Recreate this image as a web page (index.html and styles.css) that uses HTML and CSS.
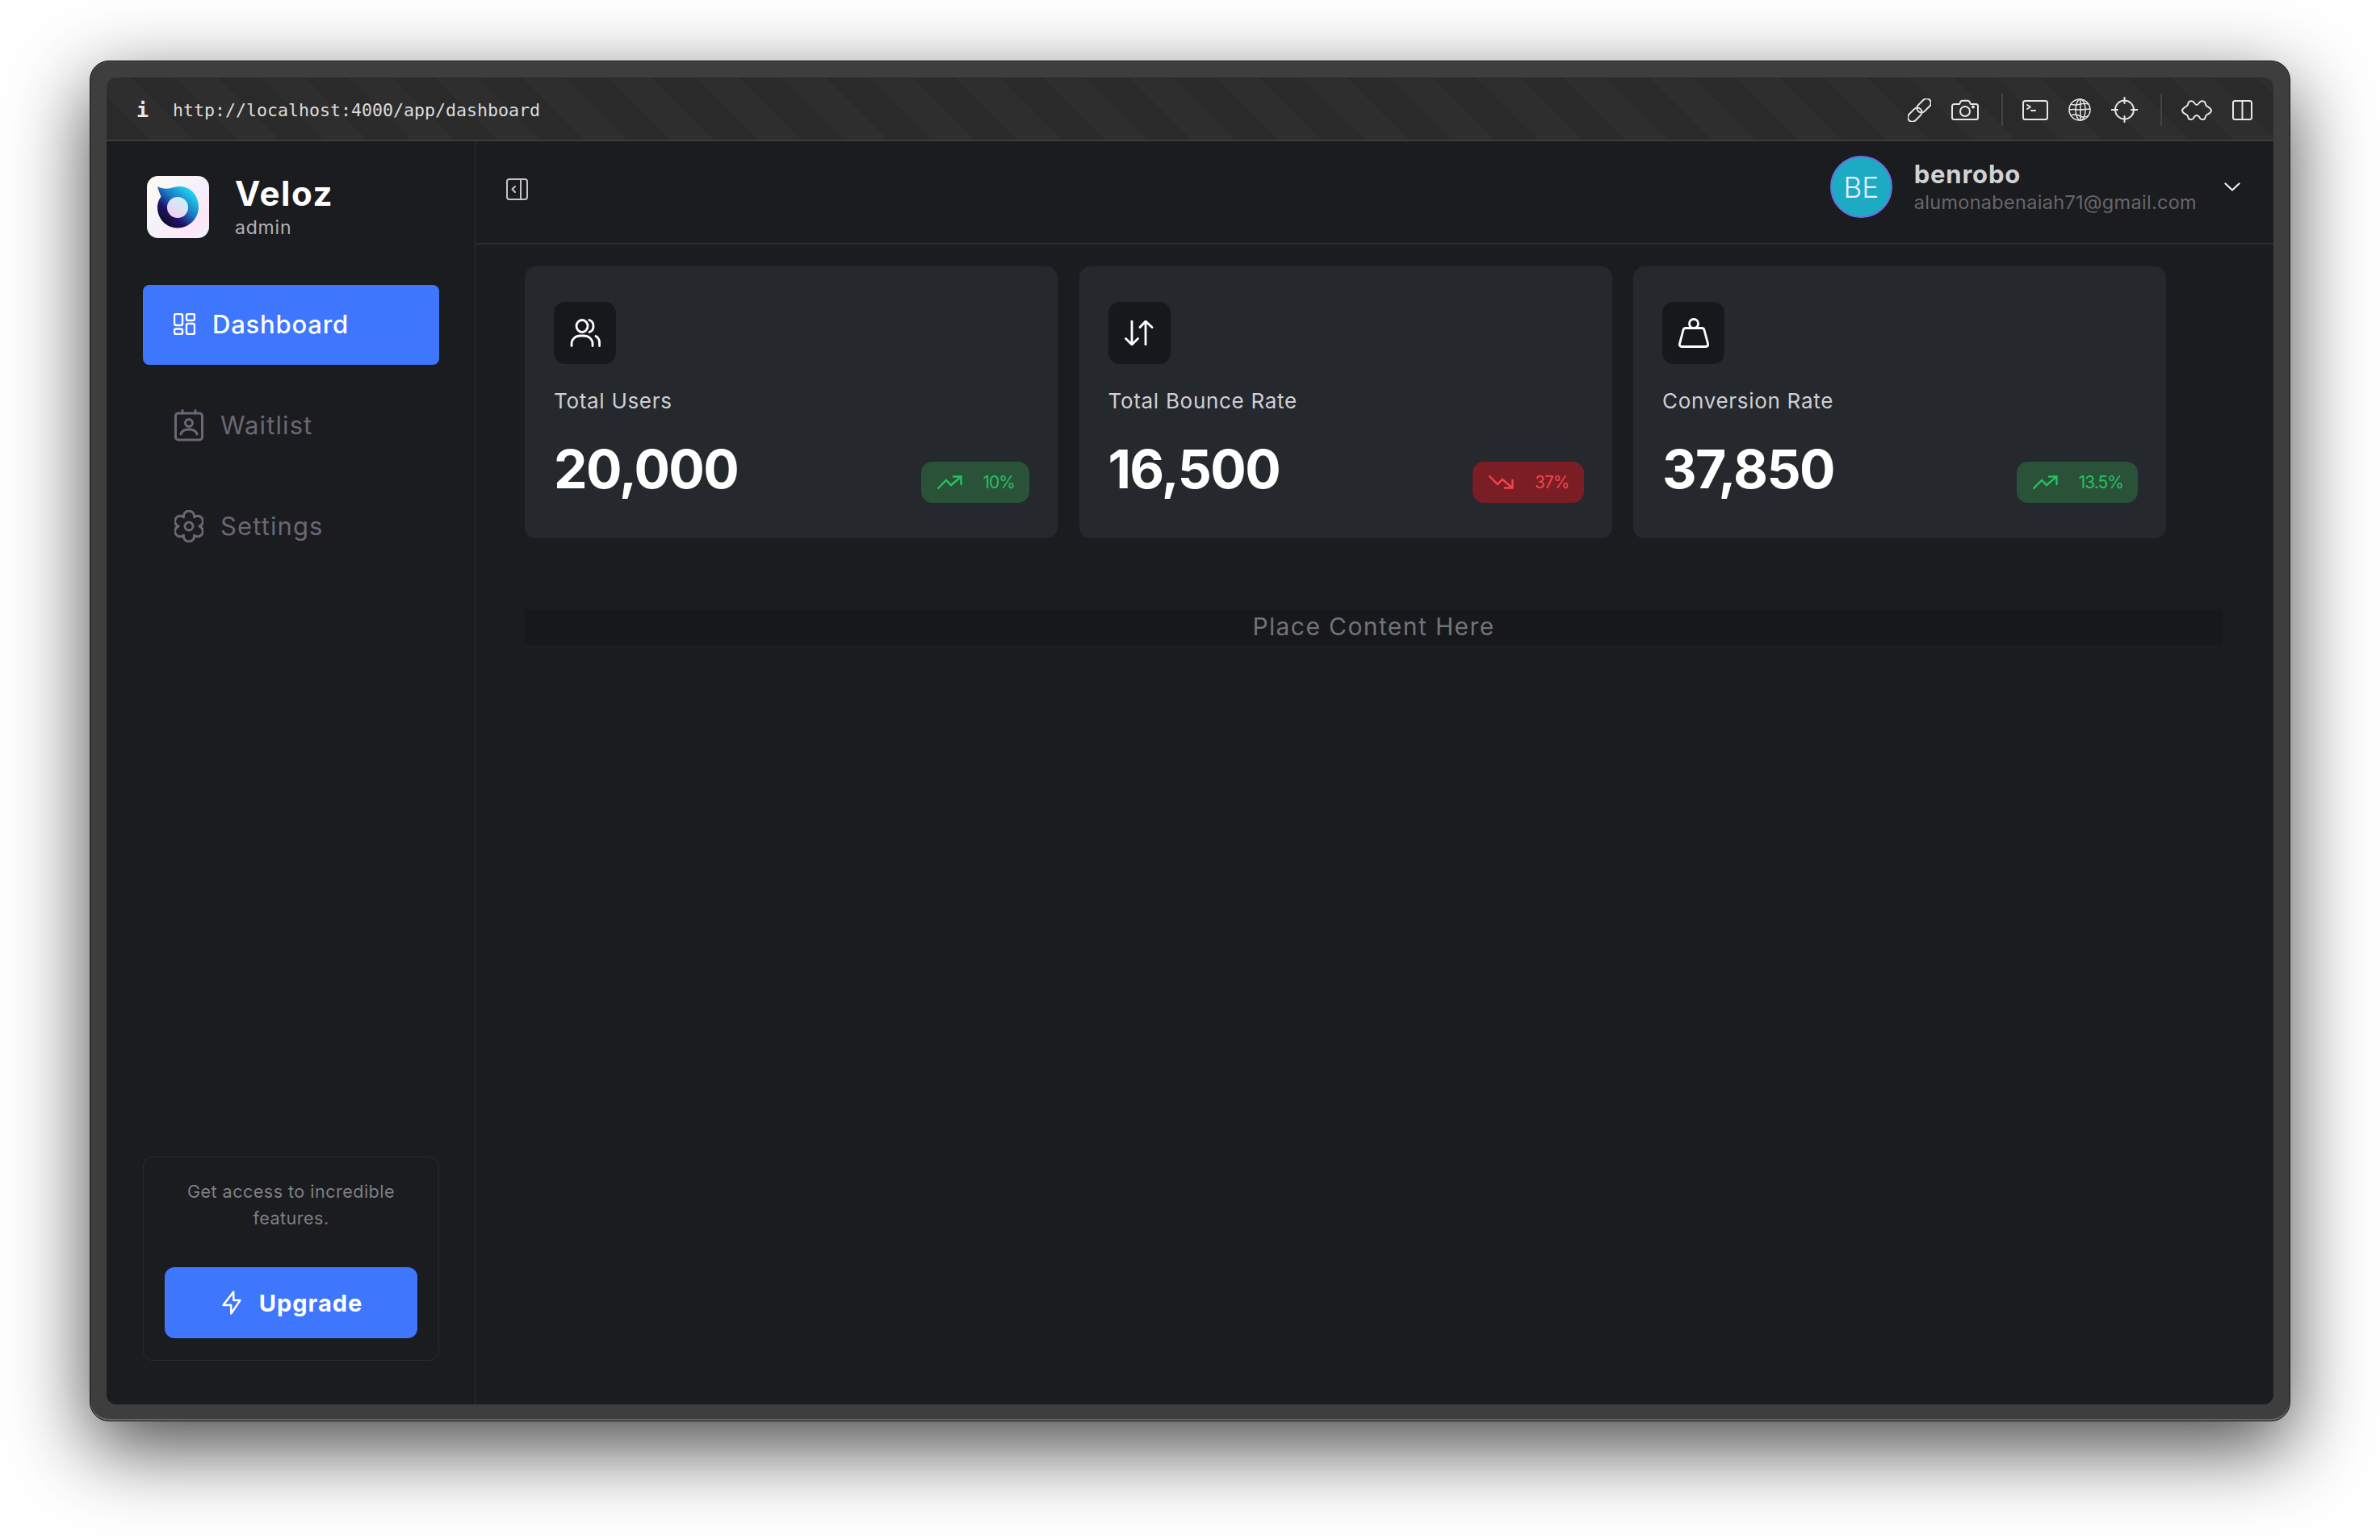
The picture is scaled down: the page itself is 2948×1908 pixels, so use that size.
FILE: index.html
```html
<!DOCTYPE html>
<html lang="en">
<head>
  <meta charset="UTF-8">
  <title>Veloz Dashboard</title>
  <link rel="stylesheet" href="styles.css">
</head>
<body>
  <div class="window">
    <div class="titlebar">
      <span class="info">i</span>
      <span class="url">http://localhost:4000/app/dashboard</span>
      <div class="tools">
        <svg class="line-icon" width="29" height="29" viewBox="0 0 29 29"><g transform="rotate(-45 14.5 14.5)"><rect x="-3.5" y="9" width="20" height="11" rx="5.5"/><rect x="12.5" y="9" width="20" height="11" rx="5.5"/></g></svg>
        <svg class="line-icon" width="34" height="26" viewBox="0 0 34 26"><path d="M3.5 6H10l1.500-3c.4-.8 1-1.200 2-1.200h7c1 0 1.600.4 2 1.200L24 6h6.500A2.500 2.500 0 0 1 33 8.500v14a2.500 2.500 0 0 1-2.500 2.500h-27A2.500 2.500 0 0 1 1 22.500v-14A2.500 2.500 0 0 1 3.500 6z"/><circle cx="17" cy="15" r="6"/><circle class="dot" cx="27" cy="9.500" r="1"/></svg>
        <span class="tool-sep"></span>
        <svg class="line-icon" width="32" height="25" viewBox="0 0 32 25"><rect x="1" y="1" width="30" height="23" rx="2.500"/><path d="M6 6l4 2.500L6 11M11 13h5"/></svg>
        <svg class="line-icon thin" width="28" height="28" viewBox="0 0 28 28"><circle cx="14" cy="14" r="13"/><ellipse cx="15" cy="14" rx="6" ry="13"/><path d="M15 1v26M3 7c4 2 8 1 12 0s7-1 10 0M1.500 14c4-1 9 0 13 0s8-1 12-1M3 21c4-2 8-1 12 1s7 1 10-1"/></svg>
        <svg class="line-icon" width="33" height="32" viewBox="0 0 33 32"><circle cx="16.500" cy="16" r="11.500"/><path d="M16.500 0v8M16.500 24v8M0 16h8M25 16h8"/></svg>
        <span class="tool-sep"></span>
        <svg class="line-icon" width="38" height="25" viewBox="0 0 38 25"><path d="M19 6C17.500 6 16.500 4 15.500 2.800 14 1 10.500.8 9 2.500 8 3.500 8.500 6 7 7 5 8.500 1 10 1 13c0 3 4 4 6 5.500 1.500 1 1 3.500 2 4.500 1.500 1.600 5 1.200 6-.5.800-1.500 1.500-3.500 4-3.500s3.200 2 4 3.500c1 1.700 4.500 2.100 6 .5 1-1 .5-3.500 2-4.500 2-1.500 6-2.500 6-5.500s-4-4.500-6-6c-1.500-1-1-3.500-2-4.500C27.500.8 24 1 22.500 2.800 21.500 4 20.500 6 19 6z"/></svg>
        <svg class="line-icon" width="25" height="25" viewBox="0 0 25 25"><rect x="1" y="1" width="23" height="23" rx="2.500"/><path d="M12.500 1v23"/></svg>
      </div>
    </div>

    <div class="layout">
      <aside class="sidebar">
        <div class="brand">
          <svg class="brand-logo" width="77" height="77" viewBox="0 0 77 77">
            <defs>
              <linearGradient id="logo-bg" x1="0" y1="0" x2="1" y2="1">
                <stop offset="0" stop-color="#fffdf2"/>
                <stop offset="0.5" stop-color="#f4f0fb"/>
                <stop offset="0.8" stop-color="#ffe6f6"/>
                <stop offset="1" stop-color="#e4f6ff"/>
              </linearGradient>
              <linearGradient id="logo-ring" x1="0.9" y1="0.1" x2="0.2" y2="0.9">
                <stop offset="0" stop-color="#25e0f7"/>
                <stop offset="0.45" stop-color="#1a78c4"/>
                <stop offset="0.75" stop-color="#20106a"/>
                <stop offset="1" stop-color="#111026"/>
              </linearGradient>
              <linearGradient id="logo-hole" x1="0.8" y1="0" x2="0.2" y2="1">
                <stop offset="0" stop-color="#c8f2fb"/>
                <stop offset="1" stop-color="#f8cdee"/>
              </linearGradient>
            </defs>
            <rect width="77" height="77" rx="14" fill="url(#logo-bg)"/>
            <path fill="url(#logo-ring)" d="M13 13c6 3 12 3.500 18 1.500 3-1 6-1.500 9-1.500 15 0 24 12 24 25.500C64 53 52 64.500 38 64.500S13 53 13 39c0-5 1.500-9.500 4.500-13.500C15.500 21 14 17 13 13z"/>
            <circle cx="38" cy="39" r="13" fill="url(#logo-hole)"/>
          </svg>
          <div class="brand-text">
            <div class="brand-name">Veloz</div>
            <div class="brand-role">admin</div>
          </div>
        </div>

        <nav class="nav">
          <a href="#dashboard" class="nav-item selected">
            <svg class="nav-icon" width="27" height="27" viewBox="0 0 27 27"><rect x="1" y="1" width="10" height="14" rx="2"/><rect x="16" y="1" width="10" height="8" rx="2"/><rect x="1" y="19.500" width="10" height="6.500" rx="2"/><rect x="16" y="13" width="10" height="13" rx="2"/></svg>
            Dashboard
          </a>
          <a href="#waitlist" class="nav-item">
            <svg class="nav-icon" width="36" height="40" viewBox="0 0 36 40"><rect x="1.500" y="5" width="33" height="33" rx="3.500"/><path d="M10 5V1.500M26 5V1.500M8 31c1-4 5-6 10-6s9 2 10 6"/><circle cx="18" cy="17" r="4.500"/></svg>
            Waitlist
          </a>
          <a href="#settings" class="nav-item">
            <svg class="nav-icon" width="36" height="40" viewBox="0 0 36 40"><path d="M11.500 8.740A6.600 6.600 0 1 1 24.500 8.740 6.600 6.600 0 1 1 31 20 6.600 6.600 0 1 1 24.500 31.260 6.600 6.600 0 1 1 11.500 31.260 6.600 6.600 0 1 1 5 20 6.600 6.600 0 1 1 11.500 8.740z"/><circle cx="18" cy="20" r="5"/></svg>
            Settings
          </a>
        </nav>

        <div class="promo">
          <p class="promo-text">Get access to incredible features.</p>
          <button class="upgrade-btn">
            <svg class="bolt" width="30" height="30" viewBox="4 2 16 20"><path d="M13.500 3v7h5.500l-7.500 11v-7H5l8.500-11z"/></svg>
            Upgrade
          </button>
        </div>
      </aside>

      <main class="main">
        <header class="header">
          <svg class="header-toggle" width="27" height="27" viewBox="0 0 27 27"><rect x="1" y="1" width="25" height="25" rx="3"/><path d="M18 1v25M11 10l-3.500 3.500L11 17"/></svg>
          <div class="profile">
            <div class="avatar">BE</div>
            <div class="profile-text">
              <div class="profile-name">benrobo</div>
              <div class="profile-mail">alumonabenaiah71@gmail.com</div>
            </div>
            <svg class="chevron" width="20" height="11" viewBox="0 0 20 11"><path d="M1.500 1.500L10 9.500l8.500-8"/></svg>
          </div>
        </header>

        <section class="content">
          <div class="cards">
            <div class="card">
              <div class="card-icon">
                <svg width="38" height="35" viewBox="0 0 38 35"><ellipse cx="15" cy="9" rx="7" ry="7.500"/><path d="M24 1.500c3 1 5 4 5 7.500s-2 6.500-5 7.500M2 33.500V31c0-6 5-10 11-10h4c6 0 11 4 11 10v2.500M32 21.500c2.500 1.500 4.500 4.500 4.500 8v4"/></svg>
              </div>
              <div class="card-label">Total Users</div>
              <div class="card-stat">
                <div class="card-value">20,000</div>
                <div class="badge badge-up">
                  <svg width="31" height="17" viewBox="0 0 31 17"><path d="M1 16l10-10 6 6L29.500 1.500M20 1.500h9.500V11"/></svg>
                  <span>10%</span>
                </div>
              </div>
            </div>

            <div class="card">
              <div class="card-icon">
                <svg width="36" height="31" viewBox="0 0 36 31"><path d="M9 1v29M1.500 22.500L9 30l7.500-7.500M26 30V1M19 8.500L26 1l8 7.500"/></svg>
              </div>
              <div class="card-label">Total Bounce Rate</div>
              <div class="card-stat">
                <div class="card-value">16,500</div>
                <div class="badge badge-down">
                  <svg width="31" height="17" viewBox="0 0 31 17"><path d="M1 1l10 10 6-6 12.500 10.500M20 15.500h9.500V6"/></svg>
                  <span>37%</span>
                </div>
              </div>
            </div>

            <div class="card">
              <div class="card-icon">
                <svg width="38" height="37" viewBox="0 0 38 37"><circle cx="19" cy="7" r="5.500"/><path d="M9 12.500h20c1.500 0 2.500.8 3 2.300l4.500 17c.5 2-.5 3.700-2.700 3.700H4.200c-2.200 0-3.200-1.700-2.700-3.700l4.500-17c.5-1.500 1.500-2.300 3-2.300z"/></svg>
              </div>
              <div class="card-label">Conversion Rate</div>
              <div class="card-stat">
                <div class="card-value">37,850</div>
                <div class="badge badge-up">
                  <svg width="31" height="17" viewBox="0 0 31 17"><path d="M1 16l10-10 6 6L29.500 1.500M20 1.500h9.500V11"/></svg>
                  <span>13.5%</span>
                </div>
              </div>
            </div>
          </div>

          <div class="placeholder">Place Content Here</div>
        </section>
      </main>
    </div>
  </div>
</body>
</html>
```

FILE: styles.css
```css
* {
  box-sizing: border-box;
}

body {
  margin: 0;
  height: 1908px;
  padding: 75px 111px 0;
  background: #fff;
  font-family: "Inter", "Liberation Sans", sans-serif;
  overflow: hidden;
}

/* outer frame */
.window {
  width: 2726px;
  height: 1686px;
  padding: 20px;
  display: flex;
  flex-direction: column;
  background: #3e3e3e;
  border: 1px solid #161616;
  border-radius: 24px;
  box-shadow: inset 0 2px 0 #444, inset 0 -2px 0 #686868, 0 32px 98px rgba(0, 0, 0, 0.72);
}

.titlebar {
  height: 79px;
  flex-shrink: 0;
  display: flex;
  align-items: center;
  padding: 3px 26px 0 37px;
  border-radius: 12px 12px 0 0;
  border-bottom: 2px solid #3b3c3e;
  background: repeating-linear-gradient(45deg, #2a2a2a 0, #2a2a2a 38px, #2e2e2e 38px, #2e2e2e 76px);
}

.info {
  width: 45px;
  font-family: "DejaVu Sans Mono", monospace;
  font-size: 25px;
  font-weight: 700;
  color: #e8e8e8;
}

.url {
  font-family: "DejaVu Sans Mono", monospace;
  font-size: 21.6px;
  color: #dcdcdc;
}

.tools {
  margin-left: auto;
  display: flex;
  align-items: center;
  gap: 25px;
}

.tool-sep {
  width: 2px;
  height: 40px;
  background: #434343;
  margin: 0 -1px 0 3px;
}

.line-icon {
  fill: none;
  stroke: #e6e6e6;
  stroke-width: 2;
  stroke-linecap: round;
  stroke-linejoin: round;
}

.line-icon.thin {
  stroke-width: 1.5;
}

.line-icon .dot {
  fill: #e6e6e6;
}

.layout {
  flex: 1;
  display: flex;
  min-height: 0;
  background: #1b1c20;
  border-radius: 0 0 12px 12px;
}

/* sidebar */
.sidebar {
  width: 457px;
  flex-shrink: 0;
  display: flex;
  flex-direction: column;
  padding: 43px 44px 54px 45px;
  border-right: 1px solid #2a2c30;
}

.brand {
  height: 77px;
  display: flex;
  align-items: center;
  gap: 32px;
  padding-left: 5px;
}

.brand-logo {
  flex-shrink: 0;
}

.brand-text {
  margin-bottom: 3px;
}

.brand-name {
  font-size: 42px;
  font-weight: 700;
  line-height: 50px;
  letter-spacing: 1.6px;
  color: #fff;
  margin-bottom: 3px;
}

.brand-role {
  font-size: 23px;
  line-height: 28px;
  letter-spacing: 0.8px;
  color: #b3b3b5;
}

.nav {
  margin-top: 58px;
  display: flex;
  flex-direction: column;
  gap: 26px;
}

.nav-item {
  height: 99px;
  display: flex;
  align-items: center;
  gap: 21px;
  padding: 0 0 2px 39px;
  border-radius: 8px;
  font-size: 31px;
  letter-spacing: 1.1px;
  color: #6b6775;
  text-decoration: none;
}

.nav-item.selected {
  padding-left: 38px;
  background: #3e76fe;
  color: #fff;
  font-weight: 500;
  letter-spacing: 0.8px;
}

.nav-icon {
  flex-shrink: 0;
  fill: none;
  stroke: currentColor;
  stroke-width: 3;
  stroke-linecap: round;
  stroke-linejoin: round;
}

.nav-item.selected .nav-icon {
  stroke-width: 2.4;
}

.promo {
  margin-top: auto;
  height: 253px;
  padding: 26px 26px 27px;
  display: flex;
  flex-direction: column;
  border: 1px solid #2a2c30;
  border-radius: 12px;
}

.promo-text {
  margin: 0;
  font-size: 21.5px;
  line-height: 33px;
  letter-spacing: 0.5px;
  text-align: center;
  color: #7f8084;
}

.upgrade-btn {
  margin-top: auto;
  height: 88px;
  display: flex;
  align-items: center;
  justify-content: center;
  gap: 19px;
  border: none;
  border-radius: 12px;
  background: #3e76fe;
  color: #fff;
  font-family: inherit;
  font-size: 29px;
  font-weight: 700;
  letter-spacing: 1px;
}

.bolt {
  fill: none;
  stroke: #fff;
  stroke-width: 1.6;
  stroke-linejoin: round;
}

/* main area */
.main {
  flex: 1;
  min-width: 0;
  display: flex;
  flex-direction: column;
}

.header {
  height: 128px;
  flex-shrink: 0;
  display: flex;
  align-items: center;
  justify-content: space-between;
  padding: 0 41px 13px 38px;
  border-bottom: 2px solid #2a2c30;
}

.header-toggle {
  margin-top: 6px;
  fill: none;
  stroke: #c4c4c6;
  stroke-width: 2;
  stroke-linecap: round;
  stroke-linejoin: round;
}

.profile {
  display: flex;
  align-items: center;
}

.avatar {
  width: 77px;
  height: 77px;
  display: flex;
  align-items: center;
  justify-content: center;
  border: 2px solid #6a70e2;
  border-radius: 50%;
  background: #1cabc2;
  color: #eef;
  font-size: 35px;
  font-weight: 300;
}

.profile-text {
  margin: 0 34px 0 27px;
}

.profile-name {
  font-size: 31px;
  font-weight: 700;
  line-height: 38px;
  letter-spacing: 0.8px;
  margin-bottom: 1px;
  color: #d2d2d2;
}

.profile-mail {
  font-size: 23.5px;
  line-height: 30px;
  letter-spacing: 0.3px;
  color: #66676a;
}

.chevron {
  fill: none;
  stroke: #f0f0f0;
  stroke-width: 2.2;
  stroke-linecap: round;
  stroke-linejoin: round;
}

.content {
  padding: 27px 63px 0 61px;
}

.cards {
  display: grid;
  grid-template-columns: repeat(3, 660px);
  column-gap: 26.5px;
}

.card {
  height: 337px;
  padding: 44px 35px 44px 36px;
  display: flex;
  flex-direction: column;
  border-radius: 14px;
  background: #25282d;
}

.card-icon {
  width: 77px;
  height: 77px;
  display: flex;
  align-items: center;
  justify-content: center;
  border-radius: 14px;
  background: #17181c;
}

.card-icon svg {
  fill: none;
  stroke: #fff;
  stroke-width: 2.8;
  stroke-linecap: round;
  stroke-linejoin: round;
}

.card-label {
  margin-top: 28px;
  font-size: 26px;
  line-height: 36px;
  letter-spacing: 0.7px;
  color: #cfcfd2;
}

.card-stat {
  margin-top: auto;
  display: flex;
  align-items: flex-end;
  justify-content: space-between;
}

.card-value {
  font-size: 66px;
  font-weight: 700;
  line-height: 76px;
  letter-spacing: -1.6px;
  padding-bottom: 4px;
  color: #fff;
}

.badge {
  height: 51px;
  display: flex;
  align-items: center;
  gap: 26px;
  padding: 0 18px 0 20px;
  border-radius: 14px;
  font-size: 21px;
  letter-spacing: -1px;
}

.badge svg {
  fill: none;
  stroke: currentColor;
  stroke-width: 2.4;
  stroke-linecap: round;
  stroke-linejoin: miter;
}

.badge-up {
  background: #2a5239;
  color: #26c15f;
}

.badge-down {
  background: #7a1d24;
  color: #f4434b;
}

.placeholder {
  margin-top: 88px;
  height: 44px;
  display: flex;
  align-items: center;
  justify-content: center;
  background: #17181c;
  font-size: 30px;
  letter-spacing: 1.4px;
  padding-bottom: 2px;
  color: #727376;
}
```
